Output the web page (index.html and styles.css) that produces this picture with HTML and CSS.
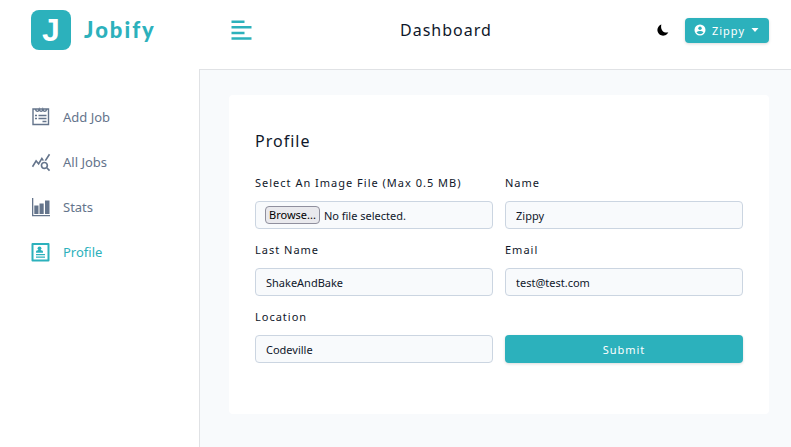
FILE: index.html
```html
<!DOCTYPE html>
<html lang="en">
<head>
<meta charset="utf-8">
<meta name="viewport" content="width=device-width, initial-scale=1">
<title>Jobify</title>
<link rel="stylesheet" href="styles.css">
</head>
<body>
<div class="layout">
  <aside class="sidebar">
    <a class="brand" href="#"><span class="brand-mark">J</span><span class="brand-name">Jobify</span></a>
    <nav class="nav">
      <a class="nav-link" href="#">
        <svg class="nav-icon" viewBox="0 0 20 20" fill="none" stroke="currentColor" stroke-width="1.4"><path d="M2 2h15.500v15.500H2zM4.500 2.500c.8 2.500 3 2.500 3.700 0 .8 2.500 3 2.500 3.700 0 .8 2.500 3 2.500 3.700 0M4 8.500h2M7.500 8.500h8M4 11.500h2M7.500 11.500h8M11.500 14.500h4"/></svg>
        Add Job</a>
      <a class="nav-link" href="#">
        <svg class="nav-icon" viewBox="0 0 24 24" fill="currentColor"><path d="M19.880 18.470c.44-.7.7-1.510.7-2.390 0-2.490-2.010-4.500-4.500-4.500s-4.500 2.010-4.500 4.500 2.010 4.500 4.490 4.500c.88 0 1.700-.26 2.390-.7L21.580 23 23 21.580l-3.120-3.110zm-3.800.11c-1.380 0-2.500-1.120-2.500-2.500s1.120-2.500 2.500-2.500 2.500 1.120 2.500 2.500-1.120 2.500-2.500 2.500zm-.36-8.500c-.74.020-1.450.18-2.100.45l-.55-.83-3.800 6.180-3.010-3.520-3.630 5.810L1 17l5-8 3 3.500L13 6l2.720 4.080zm2.590.5c-.64-.28-1.330-.45-2.050-.49L21.380 2 23 3.180l-4.690 7.400z"/></svg>
        All Jobs</a>
      <a class="nav-link" href="#">
        <svg class="nav-icon" viewBox="0 0 20 20" fill="currentColor"><path d="M1 1h1.300v17H19v1.300H1zM3.300 8.500h4.200V17H3.300zM8.500 6.500h4.200V17H8.500zM14 3.500h4.500V17H14z"/></svg>
        Stats</a>
      <a class="nav-link active" href="#" aria-current="page">
        <svg class="nav-icon" viewBox="0 0 20 20" fill="none" stroke="currentColor"><path stroke-width="2" stroke-linejoin="round" d="M1.500 2h16v16.500h-16z"/><circle cx="8.500" cy="6.300" r="1.900" fill="currentColor" stroke="none"/><path fill="currentColor" stroke="none" d="M5 10.800V9.500c0-2 7-2 7 0v1.300z"/><path stroke-width="1.200" d="M5 12.700h9M5 15.200h9"/></svg>
        Profile</a>
    </nav>
  </aside>
  <div class="content">
    <header class="topbar">
      <button class="icon-button" type="button" aria-label="Toggle sidebar">
        <svg class="menu-icon" viewBox="0 0 20 20" fill="currentColor"><path d="M.5 .5h13v2.600H.5zM.5 6h20v2.600H.5zM.5 11.700h13v2.600H.5zM.5 17.200h20v2.600H.5z"/></svg>
      </button>
      <h1 class="page-title">Dashboard</h1>
      <div class="actions">
        <button class="icon-button theme-button" type="button" aria-label="Toggle dark theme">
          <svg class="moon-icon" viewBox="0 0 12 12" fill="#000"><path d="M4.400.5A5.700 5.700 0 1 0 11.300 8.300C6.500 9.600 3 5.500 4.400.5z"/></svg>
        </button>
        <button class="button user-button" type="button">
          <svg class="user-icon" viewBox="0 0 12 12"><circle cx="6" cy="6" r="5.500" fill="#fff"/><circle cx="6" cy="4.200" r="1.700" fill="#2cb1bc"/><path d="M2.600 8.400c.6-2 6.200-2 6.800 0A4.200 4.200 0 0 1 2.600 8.400z" fill="#2cb1bc"/></svg>
          <span>Zippy</span>
          <svg class="caret-icon" viewBox="0 0 8 4" fill="#fff"><path d="M.5 0h7L4 4z"/></svg>
        </button>
      </div>
    </header>
    <main class="main">
      <form class="card">
        <h2 class="card-title">Profile</h2>
        <div class="form-grid">
          <div class="field">
            <label class="label" for="avatar">Select An Image File (Max 0.5 MB)</label>
            <label class="input file-input"><input class="visually-hidden" type="file" id="avatar" accept="image/*"><span class="browse">Browse...</span><span>No file selected.</span></label>
          </div>
          <div class="field">
            <label class="label" for="name">Name</label>
            <input class="input" type="text" id="name" value="Zippy">
          </div>
          <div class="field">
            <label class="label" for="last-name">Last Name</label>
            <input class="input" type="text" id="last-name" value="ShakeAndBake">
          </div>
          <div class="field">
            <label class="label" for="email">Email</label>
            <input class="input" type="email" id="email" value="test@test.com">
          </div>
          <div class="field">
            <label class="label" for="location">Location</label>
            <input class="input" type="text" id="location" value="Codeville">
          </div>
          <button class="button submit-button" type="submit">Submit</button>
        </div>
      </form>
    </main>
  </div>
</div>
</body>
</html>
```
FILE: styles.css
```css
:root {
  --primary: #2cb1bc;
  --text: #0f172a;
  --muted: #64748b;
  --line: #e0e2e5;
  --field-line: #cbd5e1;
  --surface: #f8fafc;
}

* {
  box-sizing: border-box;
}

body {
  margin: 0;
  background: var(--surface);
  color: var(--text);
  font-family: "Noto Sans", sans-serif;
  font-size: 11px;
}

button,
input {
  font: inherit;
}

.layout {
  display: grid;
  grid-template-columns: 200px 1fr;
  min-height: 100vh;
}

.sidebar {
  display: flex;
  flex-direction: column;
  background: #fff;
}

.brand {
  display: flex;
  align-items: center;
  gap: 13px;
  height: 69px;
  padding: 0 31px 9px;
  color: var(--primary);
  text-decoration: none;
}

.brand-mark {
  display: grid;
  place-items: center;
  width: 40px;
  height: 40px;
  border-radius: 8px;
  background: var(--primary);
  color: #fff;
  font: 700 32px/40px "Liberation Sans", sans-serif;
}

.brand-name {
  font: 900 22px/24px Lato, sans-serif;
  letter-spacing: 2px;
}

.nav {
  flex: 1;
  padding-top: 25px;
  border-right: 1px solid var(--line);
}

.nav-link {
  display: flex;
  align-items: center;
  gap: 12px;
  height: 45px;
  padding-left: 31px;
  color: var(--muted);
  font-size: 13px;
  text-decoration: none;
}

.nav-link.active {
  color: var(--primary);
}

.nav-icon {
  width: 20px;
  height: 20px;
}

.content {
  min-width: 0;
}

.topbar {
  display: flex;
  align-items: center;
  justify-content: space-between;
  height: 70px;
  padding: 0 22px 9px 31px;
  border-bottom: 1px solid var(--line);
  background: #fff;
}

.icon-button {
  display: flex;
  padding: 0;
  border: 0;
  background: none;
  color: var(--primary);
}

.menu-icon {
  width: 20px;
  height: 20px;
  overflow: visible;
}

.page-title,
.card-title {
  margin: 0;
  font-size: 16px;
  font-weight: 400;
  letter-spacing: 1px;
  line-height: 20px;
}

.actions {
  display: flex;
  align-items: center;
}

.theme-button {
  padding: 0 16px;
}

.moon-icon {
  width: 12px;
  height: 12px;
}

.button {
  border: 0;
  border-radius: 4px;
  background: var(--primary);
  box-shadow: 0 1px 3px rgb(0 0 0 / 15%);
  color: #fff;
  letter-spacing: 1px;
}

.user-button {
  display: flex;
  align-items: center;
  gap: 6px;
  height: 25px;
  padding: 0 10px 0 9px;
}

.user-icon {
  width: 12px;
  height: 12px;
}

.caret-icon {
  width: 8px;
  height: 4px;
}

.main {
  padding: 25px 22px 32px 29px;
}

.card {
  padding: 36px 26px 51px;
  border-radius: 4px;
  background: #fff;
}

.card-title {
  margin-bottom: 24px;
}

.form-grid {
  display: grid;
  grid-template-columns: 1fr 1fr;
  gap: 13px 12px;
}

.field {
  display: flex;
  flex-direction: column;
  gap: 10px;
  min-width: 0;
}

.label {
  letter-spacing: 1px;
  line-height: 16px;
}

.input {
  width: 100%;
  height: 28px;
  padding: 0 10px;
  border: 1px solid var(--field-line);
  border-radius: 4px;
  background: var(--surface);
  color: var(--text);
}

.file-input {
  position: relative;
  display: flex;
  align-items: center;
  gap: 4px;
  padding: 0 9px;
}

.browse {
  padding: 0 3px;
  border: 1px solid #8f8f9d;
  border-radius: 4px;
  background: #e9e9ed;
  color: #000;
  line-height: 16px;
}

.visually-hidden {
  position: absolute;
  width: 1px;
  height: 1px;
  opacity: 0;
}

.submit-button {
  align-self: end;
  height: 28px;
}
```
